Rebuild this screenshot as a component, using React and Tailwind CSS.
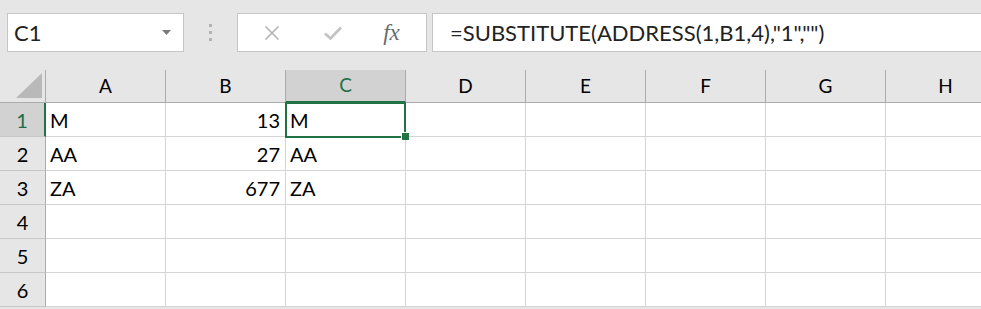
import React from 'react';

const columns = ['A', 'B', 'C', 'D', 'E', 'F', 'G', 'H'];

const rows = [
  { n: 1, A: 'M', B: '13', C: 'M' },
  { n: 2, A: 'AA', B: '27', C: 'AA' },
  { n: 3, A: 'ZA', B: '677', C: 'ZA' },
  { n: 4 },
  { n: 5 },
  { n: 6 },
];

function NameBox() {
  return (
    <div className="w-[177px] h-[39px] bg-white border border-[#c6c6c6] flex items-center justify-between pl-[6px] pr-[12px]">
      <span className="text-[22px] text-[#222]">C1</span>
      <svg width="9" height="5" viewBox="0 0 9 5">
        <path d="M0 0 H9 L4.5 5 Z" fill="#7a7a7a" />
      </svg>
    </div>
  );
}

function FormulaButtons() {
  return (
    <div className="w-[190px] h-[39px] bg-white border border-[#c6c6c6] flex items-center">
      <div className="w-[65px] flex justify-center pl-[2px]">
        <svg width="16" height="16" viewBox="0 0 16 16">
          <path d="M1.5 1.5 L14.5 14.5 M14.5 1.5 L1.5 14.5" stroke="#b3b3b3" strokeWidth="1.6" />
        </svg>
      </div>
      <div className="w-[60px] flex justify-center">
        <svg width="18" height="14" viewBox="0 0 18 14">
          <path d="M1 7.5 L6.5 12.5 L17 1.5" stroke="#c2c2c2" strokeWidth="2.6" fill="none" />
        </svg>
      </div>
      <div className="flex-1 flex justify-center pr-[6px]">
        <span className="font-['Liberation_Serif',serif] italic text-[23px] text-[#6a6a6a] leading-none">fx</span>
      </div>
    </div>
  );
}

function Cell({ children, right }) {
  return (
    <div
      className={`h-[34px] bg-white border-r border-b border-[#d4d4d4] flex items-end pb-[3px] text-[20px] text-black leading-[26px] ${right ? 'justify-end pr-[5px]' : 'pl-[4px]'}`}
    >
      {children}
    </div>
  );
}

export default function App() {
  return (
    <div className="w-[981px] h-[309px] overflow-hidden bg-[#e6e6e6] font-['Lato',sans-serif]">
      <div className="h-[70px] flex items-start pt-[13px] pl-[7px]">
        <NameBox />
        <div className="w-[53px] h-[39px] flex flex-col items-center justify-center gap-[4px]">
          <span className="w-[3px] h-[3px] bg-[#b3b3b3]" />
          <span className="w-[3px] h-[3px] bg-[#b3b3b3]" />
          <span className="w-[3px] h-[3px] bg-[#b3b3b3]" />
        </div>
        <FormulaButtons />
        <div className="ml-[5px] flex-1 h-[39px] bg-white border border-r-0 border-[#c6c6c6] flex items-center pl-[17px]">
          <span className="text-[22px] text-[#222] whitespace-nowrap">=SUBSTITUTE(ADDRESS(1,B1,4),"1","")</span>
        </div>
      </div>

      <div className="grid grid-cols-[46px_repeat(8,120px)] w-[1006px]">
        <div className="h-[33px] border-r border-b border-[#ababab] flex items-end justify-end pr-[3px] pb-[4px]">
          <svg width="26" height="25" viewBox="0 0 26 25">
            <path d="M26 0 L26 25 L0 25 Z" fill="#b9b9b9" />
          </svg>
        </div>
        {columns.map((c) => (
          <div
            key={c}
            className={`h-[33px] border-r flex items-center justify-center text-[19px] ${
              c === 'C'
                ? 'bg-[#d2d2d2] border-[#ababab] border-b-2 border-b-[#217346] text-[#217346]'
                : 'border-[#ababab] border-b text-black'
            }`}
          >
            {c}
          </div>
        ))}

        {rows.map((r) => (
          <React.Fragment key={r.n}>
            <div
              className={`h-[34px] flex items-center justify-center text-[20px] border-b ${
                r.n === 1
                  ? 'bg-[#d2d2d2] text-[#1e6b47] border-r-2 border-r-[#217346] border-b-[#c6c6c6]'
                  : 'border-r border-[#ababab] border-b-[#c6c6c6] text-black'
              }`}
            >
              {r.n}
            </div>
            {columns.map((c) =>
              r.n === 1 && c === 'C' ? (
                <div key={c} className="relative">
                  <Cell>{r[c]}</Cell>
                  <div className="absolute left-[-1px] top-[-1px] w-[121px] h-[36px] border-2 border-[#217346]" />
                  <div className="absolute left-[115px] top-[29px] w-[8px] h-[8px] bg-[#217346] border-l border-t border-white" />
                </div>
              ) : (
                <Cell key={c} right={c === 'B'}>
                  {r[c]}
                </Cell>
              )
            )}
          </React.Fragment>
        ))}
      </div>
    </div>
  );
}
